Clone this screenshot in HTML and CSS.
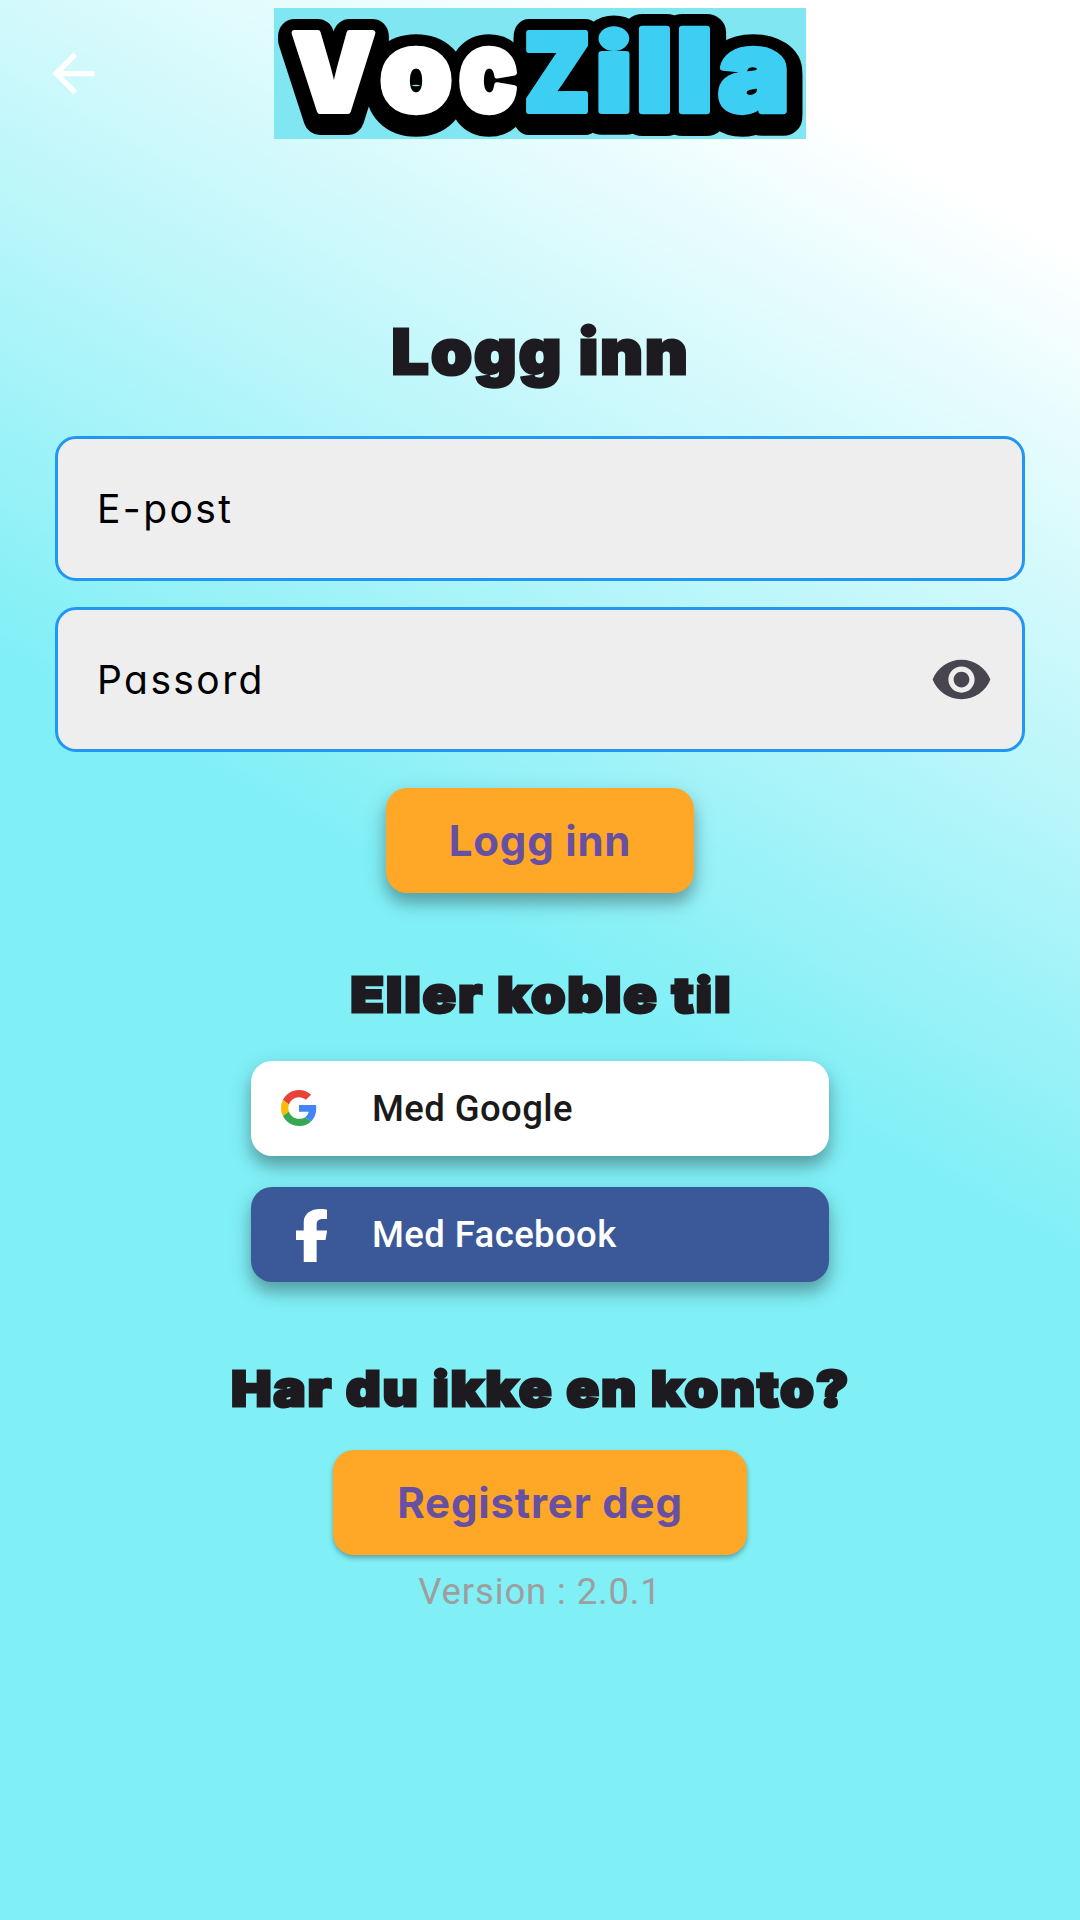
FILE: index.html
```html
<!DOCTYPE html>
<html lang="no">
<head>
<meta charset="utf-8">
<title>VocZilla</title>
<link rel="stylesheet" href="styles.css">
</head>
<body>
<header class="topbar">
  <svg class="back" viewBox="0 0 24 24"><path d="M20 11H7.830l5.590-5.590L12 4l-8 8 8 8 1.410-1.410L7.830 13H20v-2z"/></svg>
  <svg class="logo" viewBox="0 0 532 131">
    <defs>
      <g id="voc" class="letters">
        <text transform="translate(59.5 103) scale(.97 1)">V</text>
        <text transform="translate(142 102.500) scale(1.07 1.05)">o</text>
        <text transform="translate(214 102.500) scale(.9 1.05)">c</text>
      </g>
      <g id="zilla" class="letters">
        <text transform="translate(283 103) scale(.89 1)">Z</text>
        <text transform="translate(340 103) scale(1.15 .98)">i</text>
        <text transform="translate(380.500 103) scale(1.15 1.06)">l</text>
        <text transform="translate(420.500 103) scale(1.15 1.06)">l</text>
        <text transform="translate(480 102.500) scale(1.11 1.05)">a</text>
      </g>
    </defs>
    <g class="outline"><use href="#voc" y="3"/><use href="#zilla" y="3"/><use href="#voc" y="7"/><use href="#zilla" y="7"/></g>
    <use class="white" href="#voc"/><use class="blue" href="#zilla"/>
  </svg>
</header>
<main class="content">
  <h1 class="title">Logg inn</h1>
  <div class="field"><span>E-post</span></div>
  <div class="field"><span>Passord</span>
    <svg class="eye" viewBox="0 0 24 24"><path d="M12 4.500C7 4.500 2.730 7.610 1 12c1.730 4.390 6 7.500 11 7.500s9.270-3.110 11-7.500c-1.730-4.390-6-7.500-11-7.500zM12 17c-2.760 0-5-2.240-5-5s2.240-5 5-5 5 2.240 5 5-2.240 5-5 5zm0-8c-1.660 0-3 1.340-3 3s1.340 3 3 3 3-1.340 3-3-1.340-3-3-3z"/></svg>
  </div>
  <button class="btn login">Logg inn</button>
  <h2 class="subtitle connect">Eller koble til</h2>
  <button class="social google">
    <svg class="g-icon" viewBox="0 0 48 48" preserveAspectRatio="none"><path fill="#EA4335" d="M24 9.500c3.540 0 6.710 1.220 9.210 3.600l6.850-6.850C35.900 2.380 30.470 0 24 0 14.620 0 6.510 5.380 2.560 13.220l7.980 6.190C12.430 13.720 17.740 9.500 24 9.500z"/><path fill="#4285F4" d="M46.980 24.550c0-1.570-.15-3.090-.38-4.550H24v9.020h12.940c-.58 2.960-2.260 5.480-4.780 7.180l7.730 6c4.510-4.180 7.090-10.360 7.090-17.650z"/><path fill="#FBBC05" d="M10.530 28.590c-.48-1.450-.76-2.990-.76-4.590s.27-3.140.76-4.590l-7.980-6.190C.92 16.460 0 20.120 0 24c0 3.880.92 7.540 2.560 10.780l7.970-6.190z"/><path fill="#34A853" d="M24 48c6.480 0 11.930-2.130 15.890-5.810l-7.730-6c-2.150 1.450-4.920 2.300-8.160 2.300-6.260 0-11.570-4.220-13.470-9.910l-7.980 6.190C6.510 42.620 14.620 48 24 48z"/></svg>
    <span>Med Google</span>
  </button>
  <button class="social facebook">
    <svg class="f-icon" viewBox="22.890 0 262 512" preserveAspectRatio="none"><path d="M272.140 300l14.220-92.660h-88.910v-60.130c0-25.350 12.420-50.060 52.240-50.060h35.420V6.260S260.430 0 225.360 0c-73.220 0-137.080 44.380-137.080 124.720v82.620H22.890V300h65.390v212h109.170V300z"/></svg>
    <span>Med Facebook</span>
  </button>
  <h2 class="subtitle signup">Har du ikke en konto?</h2>
  <button class="btn register">Registrer deg</button>
  <p class="version">Version : 2.0.1</p>
</main>
</body>
</html>
```
FILE: styles.css
```css
* { box-sizing: border-box; }
body {
  margin: 0;
  height: 1920px;
  overflow: hidden;
  font-family: Roboto, sans-serif;
  background: linear-gradient(209.36deg, #fff 10%, #80eff6 50%);
}
.topbar { display: flex; height: 147px; padding-top: 8px; }
.back { width: 63px; height: 63px; margin: 34px 169px 0 42px; fill: #fff; }
.logo { width: 532px; height: 131px; background: #80e6f2; overflow: hidden; }
.letters {
  font-family: Inter, sans-serif;
  font-weight: 900;
  font-size: 107px;
  text-anchor: middle;
}
.outline { fill: #000; stroke: #000; stroke-width: 34px; stroke-linejoin: round; }
.white { fill: #fff; stroke: #fff; stroke-width: 6px; stroke-linejoin: round; }
.blue { fill: #3dcef3; stroke: #3dcef3; stroke-width: 6px; stroke-linejoin: round; }

.content { display: flex; flex-direction: column; align-items: center; }
.title, .subtitle {
  margin: 0;
  font-family: Inter, sans-serif;
  font-weight: 900;
  color: #1d1b20;
  white-space: nowrap;
  -webkit-text-stroke: 3px #1d1b20;
}
.title { font-size: 62px; line-height: 80px; margin-top: 165px; padding-left: 2px; letter-spacing: 2px; transform: scaleX(1.06); }
.subtitle { font-size: 48px; line-height: 60px; padding-left: 2px; letter-spacing: 2px; transform: scaleX(1.135); }
.field {
  display: flex;
  align-items: center;
  justify-content: space-between;
  width: 970px;
  height: 145px;
  margin: 44px 0 26px;
  padding: 0 29px 0 39px;
  border: 3px solid #2196f3;
  border-radius: 21px;
  background: #eee;
  font-family: Inter, sans-serif;
  font-feature-settings: "cv11";
  font-size: 39px;
  letter-spacing: 2.400px;
  color: #000;
}
.field + .field { margin: 0; }
.eye { width: 63px; height: 63px; fill: #49454f; }
.btn, .social { border: 0; padding: 0; border-radius: 21px; }
.btn {
  height: 105px;
  background: #ffa726;
  color: #6750a4;
  font-family: Inter, sans-serif;
  font-weight: 700;
  font-size: 42px;
  letter-spacing: .8px;
  font-feature-settings: "cv11";
}
.login { width: 308px; margin-top: 36px; box-shadow: 0 10px 14px rgba(0,0,0,.22), 0 8px 24px rgba(0,0,0,.16); }
.connect { margin-top: 72px; }
.social {
  display: flex;
  align-items: center;
  width: 578px;
  height: 94.500px;
  font: 500 36.500px Roboto, sans-serif;
  letter-spacing: .4px;
  box-shadow: 0 10px 14px rgba(0,0,0,.22), 0 8px 24px rgba(0,0,0,.16);
}
.google { margin-top: 36px; background: #fff; color: #1a1a1a; }
.g-icon { width: 36px; height: 36px; margin: 0 55px 0 30px; }
.facebook { margin-top: 31.500px; background: #3b5998; color: #fff; }
.f-icon { width: 31px; height: 53px; margin: 2px 45px 0 45px; fill: #fff; }
.signup { margin-top: 77px; transform: scaleX(1.115); }
.register { width: 414px; margin-top: 31px; box-shadow: 0 3px 5px rgba(0,0,0,.3); }
.version { margin: 15px 0 0; font-size: 36.500px; line-height: 43px; letter-spacing: .850px; color: #9e9e9e; }
```
